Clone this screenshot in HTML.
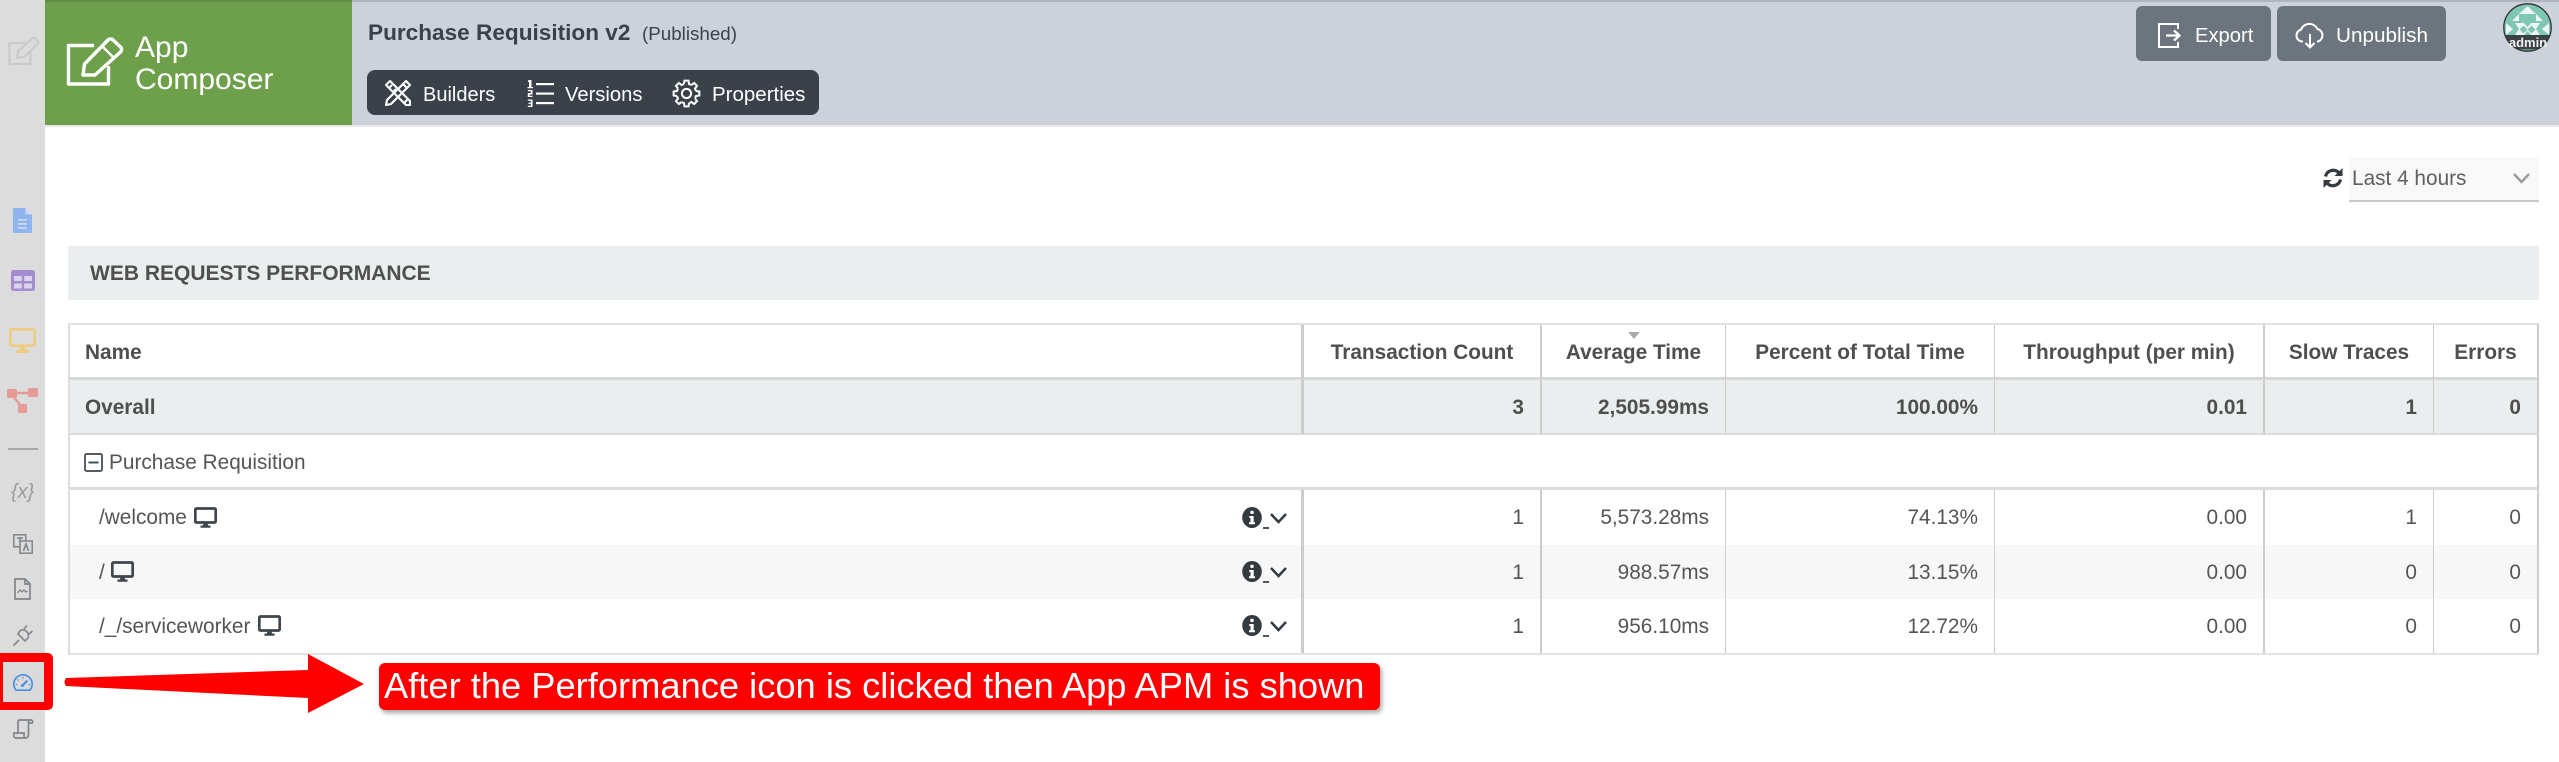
<!DOCTYPE html>
<html lang="en">
<head>
<meta charset="utf-8">
<title>App Composer - App APM</title>
<style>
html,body{margin:0;padding:0;background:#fff}
body{width:2559px;height:762px;position:relative;overflow:hidden;font-family:"Liberation Sans",sans-serif;color:#555}
.a{position:absolute;white-space:nowrap}
svg{position:absolute;overflow:visible}
#side{left:0;top:0;width:45px;height:762px;background:#dcdcdc}
#head{left:45px;top:0;width:2514px;height:125px;background:#cbd2da;border-top:2px solid #aeb5c1;box-sizing:border-box}
#headline{left:45px;top:125px;width:2514px;height:2px;background:#e6e8ea}
#green{left:45px;top:0;width:307px;height:125px;background:#6ea04c;border-top:2px solid #5f8c42;box-sizing:border-box}
.hw{color:#fff}
.btn{background:#6c757d;border-radius:6px;top:6px;height:55px}
#pill{left:367px;top:70px;width:452px;height:45px;background:#3a4149;border-radius:8px}
table{position:absolute;left:68px;top:323px;width:2471px;border-collapse:separate;border-spacing:0;table-layout:fixed;font-size:20.8px;color:#555;border-top:2px solid #e2e2e2;border-left:2px solid #ddd;border-right:2px solid #ccc;border-bottom:2px solid #e2e2e2;box-sizing:border-box}
td,th{padding:0 16px;box-sizing:border-box;text-align:right;border-right:1px solid #ccc;overflow:hidden;white-space:nowrap}
th{height:55px;font-weight:bold;text-align:center;color:#4f4f4f;border-bottom:3px solid #d8d8d8;padding:3px 0 0}
td.l,th.l{text-align:left;padding-left:15px}
td:last-child,th:last-child{border-right:0}
.c1{border-right:3px solid #ccc}
.c2{border-right:2px solid #ccc}
.c5{border-right:2px solid #ccc}
tr.ov td{height:55px;background:#ebeeef;font-weight:bold;color:#4f4f4f;border-bottom:2px solid #dcdcdc;padding-top:3px}
tr.gr td{height:55px;border-bottom:3px solid #dcdcdc;border-right:0;padding-top:3px}
tr.r td{height:55px;padding-top:1px}
tr.s td{background:#f7f7f7;height:54px}
tr.e td{height:54px}
</style>
</head>
<body>
<div class="a" id="side"></div>
<div class="a" id="head"></div>
<div class="a" id="headline"></div>
<div class="a" id="green"></div>

<svg width="0" height="0" style="left:0;top:0">
<defs>
<symbol id="mon" viewBox="0 0 23 21"><path d="M2.500 1.500h18a1.200 1.200 0 0 1 1.200 1.200v11.600a1.200 1.200 0 0 1-1.200 1.200h-18a1.200 1.200 0 0 1-1.200-1.200V2.700a1.200 1.200 0 0 1 1.200-1.200z" fill="none" stroke="#3f454c" stroke-width="2.700"/><path d="M9.500 16h4l.6 2.500h2.400V20.800H6.500V18.500h2.400z" fill="#3f454c"/></symbol>
<symbol id="inf" viewBox="0 0 20 21"><ellipse cx="10" cy="10.500" rx="9.800" ry="10.500" fill="#343a40"/><rect x="8.300" y="3.800" width="3.400" height="3.200" rx="1" fill="#fff"/><path d="M7.300 9h4.400v6.300h1.300v2H7v-2h1.500v-4.300H7.300z" fill="#fff"/></symbol>
</defs>
</svg>

<!-- sidebar icons -->
<svg style="left:6px;top:36px" width="34" height="30" viewBox="0 0 34 30" fill="none" stroke="#cacaca" stroke-width="2.200"><path d="M19 7H3.500v21h21V15"/><path d="M11 22l1-7L26 2.500a2.500 2.500 0 0 1 3.500 0l2 2a2.500 2.500 0 0 1 0 3.500L18 21z"/></svg>
<svg style="left:13px;top:208px" width="19" height="25" viewBox="0 0 19 25"><path d="M1 0h11l7 7v17a1 1 0 0 1-1 1H1a1 1 0 0 1-1-1V1a1 1 0 0 1 1-1z" fill="#8fb4ee"/><path d="M12.500 0v6.500H19z" fill="#c7d9f5"/><path d="M5 11h9v1.800H5zM5 15h9v1.800H5zM5 19h9v1.800H5z" fill="#c7d9f5"/></svg>
<svg style="left:11px;top:270px" width="24" height="21" viewBox="0 0 24 21"><rect width="24" height="21" rx="2.500" fill="#a58cd0"/><rect x="3" y="6" width="7.800" height="5" fill="#dcd3ec"/><rect x="13.200" y="6" width="7.800" height="5" fill="#dcd3ec"/><rect x="3" y="13.500" width="7.800" height="5" fill="#dcd3ec"/><rect x="13.200" y="13.500" width="7.800" height="5" fill="#dcd3ec"/></svg>
<svg style="left:9px;top:328px" width="27" height="25" viewBox="0 0 27 25"><rect x="1.300" y="1.300" width="24.400" height="16.400" rx="2" fill="none" stroke="#eecb7e" stroke-width="2.600"/><path d="M11 19h5l.5 3h3.500v3H7v-3h3.500z" fill="#eecb7e"/></svg>
<svg style="left:7px;top:388px" width="31" height="25" viewBox="0 0 31 25"><rect x="0" y="1" width="10" height="9" rx="1.500" fill="#e59a96"/><rect x="21" y="0" width="10" height="9" rx="1.500" fill="#e59a96"/><rect x="11" y="16" width="9" height="9" rx="1.500" fill="#e59a96"/><path d="M8 5h15M6 8l8 10" stroke="#e59a96" stroke-width="2.400"/></svg>
<div class="a" style="left:8px;top:448px;width:30px;height:2px;background:#a8a8a8"></div>
<div class="a" style="left:11px;top:481px;font:italic 20px 'Liberation Sans',sans-serif;color:#9a9a9a">{x}</div>
<svg style="left:13px;top:534px" width="20" height="20" viewBox="0 0 20 20" fill="none" stroke="#80858a" stroke-width="1.500"><rect x=".8" y=".8" width="12" height="12"/><rect x="7" y="7" width="12.200" height="12.200" fill="#dcdcdc"/><path d="M4 4h6M7 3v6M10.500 17l2.500-7 2.500 7" stroke-width="1.600"/></svg>
<svg style="left:14px;top:578px" width="17" height="22" viewBox="0 0 17 22" fill="none" stroke="#80858a" stroke-width="1.700"><path d="M1 1h10l5 5v15H1z"/><path d="M11 1v5h5"/><path d="M3.500 15l2.500-3 2 2 2-2 2 2 1.500-1" stroke-width="1.300"/></svg>
<svg style="left:13px;top:625px" width="20" height="21" viewBox="0 0 20 21" fill="none" stroke="#80858a" stroke-width="1.600"><path d="M0.500 20.500L6 15M5 9l7 7 3-3c1-2 0-5-1-6l-1-1c-1-1-4-2-6 0zM11 4l3-3.500M16 9l3.500-3"/></svg>
<div class="a" style="left:0;top:653px;width:53px;height:57px;background:#f00;border-radius:0 5px 5px 0"></div>
<div class="a" style="left:3px;top:662px;width:41px;height:40px;background:#dadada"></div>
<svg style="left:13px;top:674px" width="20" height="17" viewBox="0 0 20 17" fill="none" stroke="#4a90e2" stroke-width="1.700"><path d="M3.200 16.200a9.200 9.200 0 1 1 13.600 0z"/><path d="M10 11l4.500-4.500" stroke-width="2"/><circle cx="9.500" cy="11.500" r="1.500" fill="#4a90e2" stroke="none"/><path d="M10 3v1.500M4.500 5.500l1 1M2.800 10.500h1.500M15.700 10.500h1.500" stroke-width="1.200"/></svg>
<svg style="left:13px;top:719px" width="20" height="20" viewBox="0 0 20 20" fill="none" stroke="#80858a" stroke-width="1.700"><path d="M5 14V2.500A1.800 1.800 0 0 1 6.800 1H18a1.800 1.800 0 0 1 1.200 3H15.500v11.500c0 2.500-1.500 3.500-3 3.500H3c-1.500 0-2.200-1.200-2.200-2.500V14H11v2.500c0 1 .5 2.500 2 2.500"/><path d="M15.500 1v3"/></svg>

<!-- logo -->
<svg style="left:64px;top:36px" width="60" height="52" viewBox="0 0 60 52" fill="none" stroke="#fff" stroke-width="3.400" stroke-linejoin="round"><path d="M30 9.500H4.500V48H44.500V30"/><path d="M19 39l1.500-11L44 4a3.500 3.500 0 0 1 5 0l7.500 7a3.500 3.500 0 0 1 0 5L31 39z"/><path d="M38 10l12 12" stroke-width="2.400"/></svg>
<div class="a hw" style="left:135px;top:31px;font-size:30px;line-height:34px">App</div>
<div class="a hw" style="left:135px;top:63px;font-size:30px;line-height:34px">Composer</div>

<!-- title -->
<div class="a" style="left:368px;top:19px;font-size:22.600px;line-height:28px;font-weight:bold;color:#3a4149">Purchase Requisition v2</div>
<div class="a" style="left:642px;top:21px;font-size:18.800px;line-height:26px;color:#3a4149">(Published)</div>

<!-- pill -->
<div class="a" id="pill"></div>
<svg style="left:384px;top:79px" width="28" height="28" viewBox="0 0 28 28" fill="none" stroke="#fff" stroke-width="2.100" stroke-linejoin="round"><path d="M2 6l4-4 20 20v4h-4z"/><path d="M5 9l3-3M9 13l3-3M20 24l4-4"/><path d="M22 2l4 4L7 25l-5 1 1-5z"/><path d="M19 5l4 4"/></svg>
<svg style="left:527px;top:80px" width="27" height="27" viewBox="0 0 27 27" fill="#fff"><rect x="9" y="3" width="18" height="2.200"/><rect x="9" y="12.500" width="18" height="2.200"/><rect x="9" y="22" width="18" height="2.200"/><path d="M1.500 0h3v7h1.500v1.300H.5V7H2V2H.8zM.8 10h4.700v4.500H2.500v1.200h3v1.300H.8v-4h3v-1.700h-3zM.8 19.500h4.700V27H.8v-1.300h3v-1.800h-2.500v-1.200h2.500v-1.900h-3z"/></svg>
<svg style="left:673px;top:80px" width="27" height="27" viewBox="0 0 27 27" fill="none" stroke="#fff" stroke-width="2">
<g transform="translate(13.500 13.500)">
<path d="M-2.540-9.470L-2.030-12.840H2.030L2.540-9.470A9.800 9.800 0 0 1 4.900-8.490"/>
<path transform="rotate(45)" d="M-2.540-9.470L-2.030-12.840H2.030L2.540-9.470A9.800 9.800 0 0 1 4.900-8.490"/>
<path transform="rotate(90)" d="M-2.540-9.470L-2.030-12.840H2.030L2.540-9.470A9.800 9.800 0 0 1 4.900-8.490"/>
<path transform="rotate(135)" d="M-2.540-9.470L-2.030-12.840H2.030L2.540-9.470A9.800 9.800 0 0 1 4.900-8.490"/>
<path transform="rotate(180)" d="M-2.540-9.470L-2.030-12.840H2.030L2.540-9.470A9.800 9.800 0 0 1 4.900-8.490"/>
<path transform="rotate(225)" d="M-2.540-9.470L-2.030-12.840H2.030L2.540-9.470A9.800 9.800 0 0 1 4.900-8.490"/>
<path transform="rotate(270)" d="M-2.540-9.470L-2.030-12.840H2.030L2.540-9.470A9.800 9.800 0 0 1 4.900-8.490"/>
<path transform="rotate(315)" d="M-2.540-9.470L-2.030-12.840H2.030L2.540-9.470A9.800 9.800 0 0 1 4.900-8.490"/>
<circle r="4.600"/>
</g></svg>
<div class="a hw" style="left:423px;top:81px;font-size:20px;line-height:28px">Builders</div>
<div class="a hw" style="left:565px;top:81px;font-size:20.200px;line-height:28px">Versions</div>
<div class="a hw" style="left:712px;top:81px;font-size:20.500px;line-height:28px">Properties</div>

<!-- buttons -->
<div class="a btn" style="left:2136px;width:135px"></div>
<div class="a btn" style="left:2277px;width:169px"></div>
<svg style="left:2158px;top:23px" width="23" height="25" viewBox="0 0 23 25" fill="none" stroke="#fff" stroke-width="2"><path d="M20 6V1H1v23h19v-5"/><path d="M8 12.500h13M16 7.500l5.500 5-5.500 5" stroke-width="2.300"/></svg>
<svg style="left:2295px;top:23px" width="30" height="26" viewBox="0 0 30 26" fill="none" stroke="#fff" stroke-width="2"><path d="M8 18.500H7a6 6 0 0 1-1-11.800A9 9 0 0 1 22.500 6 6.500 6.500 0 0 1 23 18.500h-1"/><path d="M15 11v13M10.500 20l4.500 4.500 4.500-4.500"/></svg>
<div class="a hw" style="left:2195px;top:22px;font-size:20.200px;line-height:28px">Export</div>
<div class="a hw" style="left:2336px;top:22px;font-size:20.700px;line-height:28px">Unpublish</div>

<!-- avatar -->
<svg style="left:2503px;top:3px" width="49" height="49" viewBox="0 0 49 49">
<defs><clipPath id="av"><circle cx="24.500" cy="24.500" r="23.500"/></clipPath></defs>
<g clip-path="url(#av)">
<rect width="49" height="49" fill="#7fc6b5"/>
<path d="M24.500 3L33 11H16zM16 11l-7 7h7zM33 11l7 7h-7zM3 20l7 6-7 6zM46 20l-7 6 7 6zM12 20h9l3.500 4 3.500-4h9l-4 6 4 6H28l-3.500-4-3.500 4H12l4-6z" fill="#eef6f3"/>
<path d="M20.500 22.500l4 4-4 4-4-4zM28.500 22.500l4 4-4 4-4-4z" fill="#7fc6b5"/>
<rect y="32" width="49" height="14" fill="#3a4245"/>
<rect y="46" width="49" height="3" fill="#6b9388"/>
</g>
<circle cx="24.500" cy="24.500" r="23.700" fill="none" stroke="#333" stroke-width="1.300"/>
<text x="25" y="44" text-anchor="middle" font-family="Liberation Sans, sans-serif" font-size="13" font-weight="bold" fill="#f2f2f2">admin</text>
</svg>

<!-- time range -->
<svg style="left:2323px;top:168px" width="20" height="20" viewBox="0 0 20 20" fill="none" stroke="#343a40" stroke-width="3.200"><path d="M2.500 8.500A7.800 7.800 0 0 1 16 5"/><path d="M17.500 11.500A7.800 7.800 0 0 1 4 15"/><path d="M19.500 0v8h-8z" fill="#343a40" stroke="none"/><path d="M.5 20v-8h8z" fill="#343a40" stroke="none"/></svg>
<div class="a" style="left:2349px;top:157px;width:190px;height:45px;background:#f8f8f8;border-bottom:2px solid #c8c8c8;box-sizing:border-box"></div>
<div class="a" style="left:2352px;top:166px;font-size:20.800px;line-height:26px;color:#5f5f5f">Last 4 hours</div>
<svg style="left:2513px;top:173px" width="17" height="11" viewBox="0 0 17 11" fill="none" stroke="#9a9a9a" stroke-width="2.400"><path d="M1 1l7.500 8L16 1"/></svg>

<!-- section header -->
<div class="a" style="left:68px;top:246px;width:2471px;height:54px;background:#ebeeef"></div>
<div class="a" style="left:90px;top:261px;font-size:21px;line-height:26px;font-weight:bold;color:#4f4f4f">WEB REQUESTS PERFORMANCE</div>

<!-- table -->
<table>
<colgroup><col style="width:1234px"><col style="width:238px"><col style="width:184px"><col style="width:269px"><col style="width:270px"><col style="width:169px"><col></colgroup>
<tr><th class="l c1">Name</th><th class="c2">Transaction Count</th><th>Average Time</th><th>Percent of Total Time</th><th class="c5">Throughput (per min)</th><th>Slow Traces</th><th>Errors</th></tr>
<tr class="ov"><td class="l c1">Overall</td><td class="c2">3</td><td>2,505.99ms</td><td>100.00%</td><td class="c5">0.01</td><td>1</td><td>0</td></tr>
<tr class="gr"><td class="l" colspan="7" style="padding-left:39px">Purchase Requisition</td></tr>
<tr class="r"><td class="l c1" style="padding-left:29px">/welcome</td><td class="c2">1</td><td>5,573.28ms</td><td>74.13%</td><td class="c5">0.00</td><td>1</td><td>0</td></tr>
<tr class="r s"><td class="l c1" style="padding-left:29px">/</td><td class="c2">1</td><td>988.57ms</td><td>13.15%</td><td class="c5">0.00</td><td>0</td><td>0</td></tr>
<tr class="r e"><td class="l c1" style="padding-left:29px">/_/serviceworker</td><td class="c2">1</td><td>956.10ms</td><td>12.72%</td><td class="c5">0.00</td><td>0</td><td>0</td></tr>
</table>

<svg style="left:1628px;top:332px" width="12" height="7" viewBox="0 0 12 7"><path d="M0 0h12L6 7z" fill="#aaa"/></svg>
<svg style="left:84px;top:453px" width="19" height="19" viewBox="0 0 19 19" fill="none" stroke="#3f454c" stroke-width="1.700"><rect x="1" y="1" width="17" height="17" rx="1.500"/><path d="M4.500 9.500h10" stroke-width="1.900"/></svg>

<svg style="left:194px;top:507px" width="23" height="21"><use href="#mon"/></svg>
<svg style="left:111px;top:561px" width="23" height="21"><use href="#mon"/></svg>
<svg style="left:258px;top:615px" width="23" height="21"><use href="#mon"/></svg>

<svg style="left:1242px;top:507px" width="20" height="21"><use href="#inf"/></svg>
<svg style="left:1242px;top:561px" width="20" height="21"><use href="#inf"/></svg>
<svg style="left:1242px;top:615px" width="20" height="21"><use href="#inf"/></svg>
<div class="a" style="left:1263px;top:527px;width:6px;height:2px;background:#555"></div>
<div class="a" style="left:1263px;top:581px;width:6px;height:2px;background:#555"></div>
<div class="a" style="left:1263px;top:635px;width:6px;height:2px;background:#555"></div>
<svg style="left:1270px;top:513px" width="17" height="11" viewBox="0 0 17 11" fill="none" stroke="#343a40" stroke-width="2.500"><path d="M1 1l7.500 8L16 1"/></svg>
<svg style="left:1270px;top:567px" width="17" height="11" viewBox="0 0 17 11" fill="none" stroke="#343a40" stroke-width="2.500"><path d="M1 1l7.500 8L16 1"/></svg>
<svg style="left:1270px;top:621px" width="17" height="11" viewBox="0 0 17 11" fill="none" stroke="#343a40" stroke-width="2.500"><path d="M1 1l7.500 8L16 1"/></svg>

<!-- annotation -->
<svg style="left:0;top:0" width="2559" height="762"><path d="M66 678L308 670V654L364 684L308 713V698L66 686Q63 682 66 678z" fill="#f00"/></svg>
<div class="a" style="left:379px;top:663px;width:1001px;height:47px;background:#f00;border-radius:6px;box-shadow:2px 3px 5px rgba(0,0,0,.35)"></div>
<div class="a" style="left:384px;top:664px;font-size:36.300px;line-height:43px;color:#fff">After the Performance icon is clicked then App APM is shown</div>
</body>
</html>
